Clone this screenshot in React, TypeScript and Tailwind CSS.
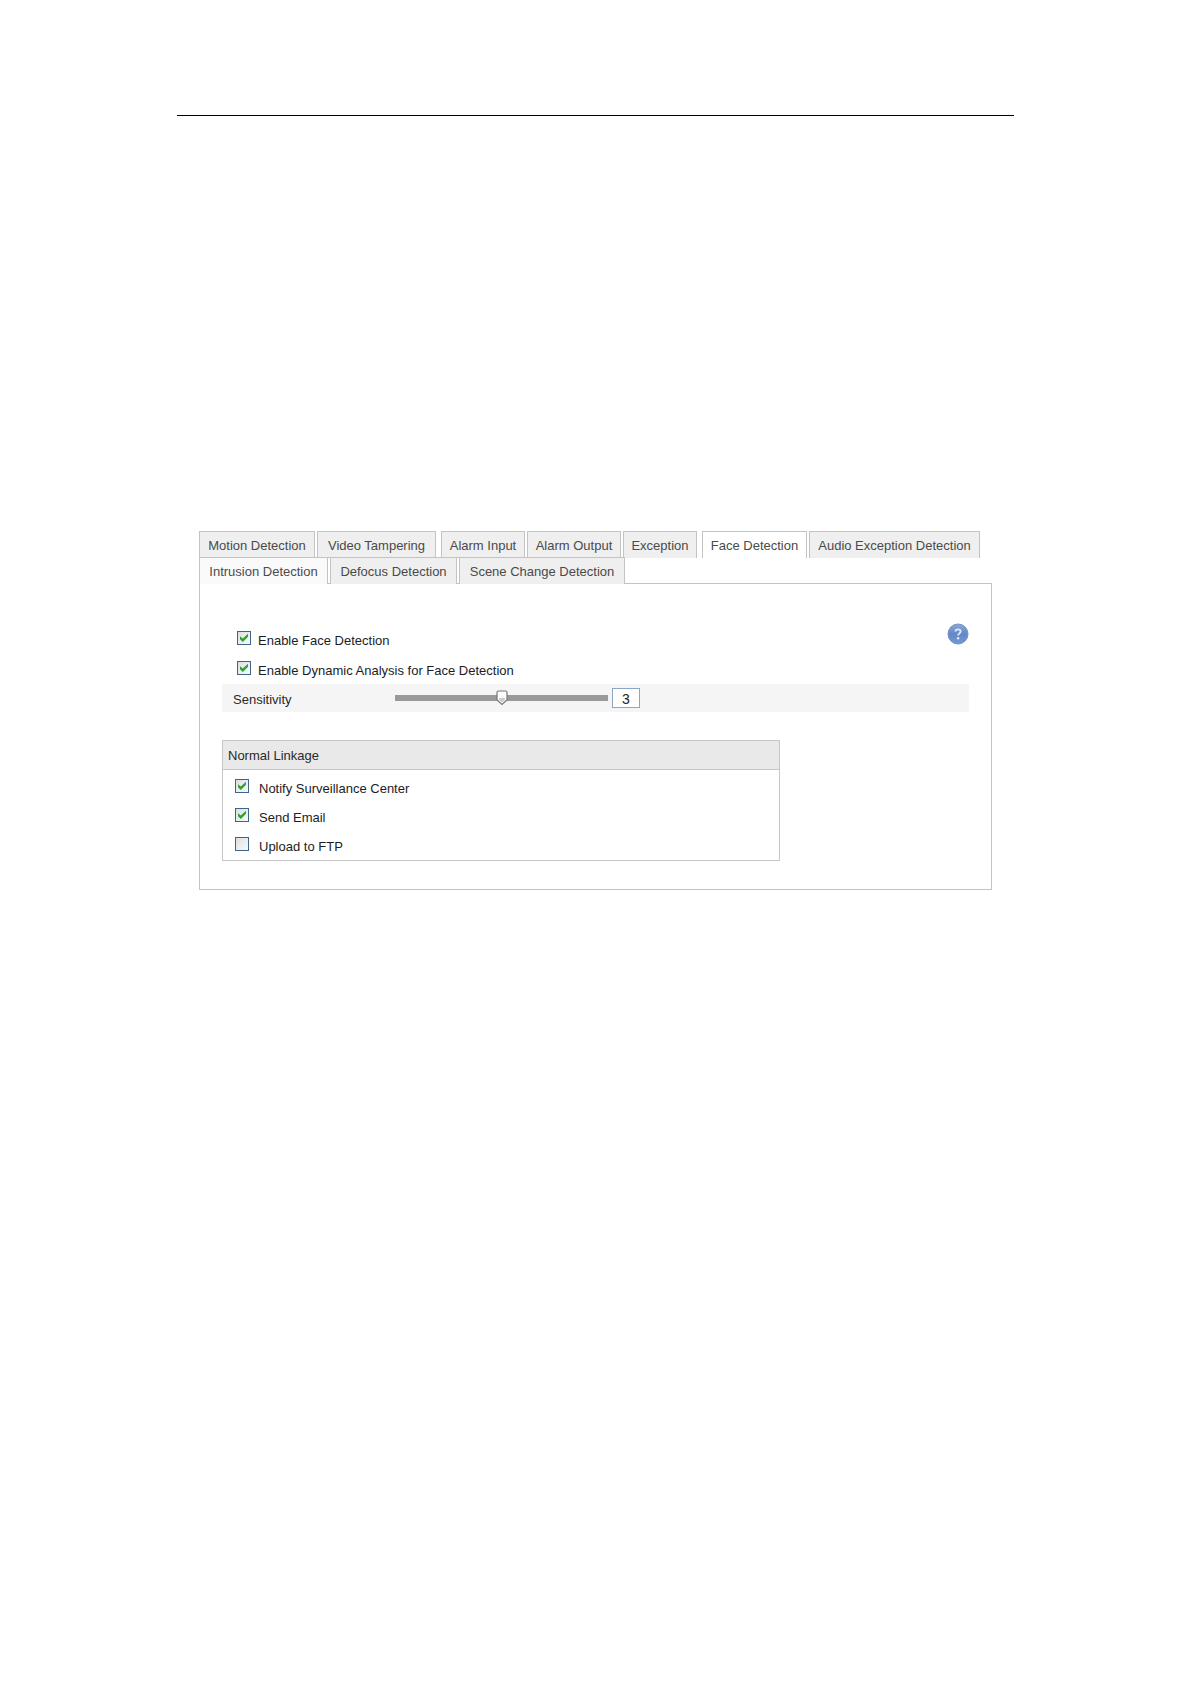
import { useState } from "react";

const upperTabs = [
  [
    { label: "Motion Detection", width: "min-w-[116px]" },
    { label: "Video Tampering", width: "min-w-[119px]" },
  ],
  [
    { label: "Alarm Input", width: "min-w-[84px]" },
    { label: "Alarm Output", width: "min-w-[94px]" },
    { label: "Exception", width: "min-w-[74px]" },
  ],
  [
    { label: "Face Detection", width: "min-w-[105px]" },
    { label: "Audio Exception Detection", width: "min-w-[171px]" },
  ],
];

const lowerTabs = [
  { label: "Intrusion Detection", width: "min-w-[129px]" },
  { label: "Defocus Detection", width: "min-w-[127px]" },
  { label: "Scene Change Detection", width: "min-w-[166px]" },
];

type CheckFieldProps = {
  id: string;
  label: string;
  gap: string;
  checked: boolean;
  onChange: (checked: boolean) => void;
};

function CheckField({ id, label, gap, checked, onChange }: CheckFieldProps) {
  return (
    <div className={`flex items-start ${gap}`}>
      <span className="grid h-[14px] w-[14px]">
        <input
          id={id}
          type="checkbox"
          checked={checked}
          onChange={(e) => onChange(e.target.checked)}
          className="col-start-1 row-start-1 h-[14px] w-[14px] appearance-none border border-[#3d6489] bg-linear-to-br from-[#dcdfe2] to-[#fafafa]"
        />
        {checked && (
          <svg
            viewBox="0 0 14 14"
            className="pointer-events-none col-start-1 row-start-1 h-[14px] w-[14px]"
            fill="#2da22d"
          >
            <path d="M3 5.2 L5.8 7.6 L11 2.8 V5.8 L5.8 10.9 L3 8.2 Z" />
          </svg>
        )}
      </span>
      <label htmlFor={id} className="mt-0.5 leading-4 text-[#1c1c24]">
        {label}
      </label>
    </div>
  );
}

function HelpIcon() {
  return (
    <svg viewBox="0 0 22 22" className="h-[22px] w-[22px]">
      <defs>
        <linearGradient id="helpFill" x1="0" y1="0" x2="0" y2="1">
          <stop offset="0" stopColor="#8aaadb" />
          <stop offset="0.5" stopColor="#6288c6" />
          <stop offset="1" stopColor="#7299d4" />
        </linearGradient>
      </defs>
      <circle cx="11" cy="11" r="10" fill="url(#helpFill)" stroke="#7390bb" />
      <path
        d="M8.5 8.6 C8.5 5.6 13.6 5.7 13.6 8.5 C13.6 10.4 11.1 10.4 11.1 12.6"
        fill="none"
        stroke="#dfe9f8"
        strokeWidth="1.9"
      />
      <circle cx="11.1" cy="15.2" r="1.2" fill="#dfe9f8" />
    </svg>
  );
}

export default function App() {
  const [activeTab, setActiveTab] = useState("Face Detection");
  const [enableFace, setEnableFace] = useState(true);
  const [enableDynamic, setEnableDynamic] = useState(true);
  const [sensitivity, setSensitivity] = useState(3);
  const [linkage, setLinkage] = useState([
    { id: "notify", label: "Notify Surveillance Center", checked: true },
    { id: "email", label: "Send Email", checked: true },
    { id: "ftp", label: "Upload to FTP", checked: false },
  ]);

  const toggleLinkage = (id: string, checked: boolean) => {
    setLinkage(linkage.map((item) => (item.id === id ? { ...item, checked } : item)));
  };

  return (
    <div className="min-h-screen bg-white px-4 pt-[115px] pb-16 font-['Liberation_Sans',Arial,sans-serif] text-[13px]">
      <div className="mx-auto max-w-[837px]">
        <hr className="border-black" />

        <main className="mx-[22px] mt-[415px] text-[#4a4a4a]">
          <div role="tablist">
            <div className="relative z-10 -mb-px flex gap-[5px]">
              {upperTabs.map((group) => (
                <div key={group[0].label} className="flex gap-[2px]">
                  {group.map((tab) => (
                    <button
                      key={tab.label}
                      role="tab"
                      aria-selected={activeTab === tab.label}
                      onClick={() => setActiveTab(tab.label)}
                      className={`h-[27px] border border-b-0 border-[#c3c3c3] px-[7px] pt-px whitespace-nowrap ${tab.width} ${
                        activeTab === tab.label ? "bg-white" : "bg-[#efefef]"
                      }`}
                    >
                      {tab.label}
                    </button>
                  ))}
                </div>
              ))}
            </div>
            <div className="relative z-10 -mb-px flex w-fit gap-[2px] border-t border-[#c3c3c3]">
              {lowerTabs.map((tab, i) => (
                <button
                  key={tab.label}
                  role="tab"
                  aria-selected={activeTab === tab.label}
                  onClick={() => setActiveTab(tab.label)}
                  className={`h-[26px] border-x border-[#c3c3c3] px-[7px] pt-px whitespace-nowrap ${tab.width} ${
                    i === 0 ? "bg-[#fafafa]" : "bg-[#efefef]"
                  }`}
                >
                  {tab.label}
                </button>
              ))}
            </div>
          </div>

          <div className="border border-[#c3c3c3] px-[22px] pt-[39px] pb-[28px]">
            <div className="flex items-start justify-between">
              <div className="flex flex-col gap-3 pt-2 pb-[5px] pl-[15px]">
                <CheckField
                  id="enable-face"
                  label="Enable Face Detection"
                  gap="gap-[7px]"
                  checked={enableFace}
                  onChange={setEnableFace}
                />
                <CheckField
                  id="enable-dynamic"
                  label="Enable Dynamic Analysis for Face Detection"
                  gap="gap-[7px]"
                  checked={enableDynamic}
                  onChange={setEnableDynamic}
                />
              </div>
              <button aria-label="Help">
                <HelpIcon />
              </button>
            </div>

            <div className="flex h-7 items-center bg-[#f5f5f5] pb-px pl-[11px] text-[#2a2a2a]">
              <label htmlFor="sensitivity" className="w-[162px] pt-1">
                Sensitivity
              </label>
              <div className="relative flex h-4 w-[213px] items-center">
                <input
                  id="sensitivity"
                  type="range"
                  min={1}
                  max={5}
                  value={sensitivity}
                  onChange={(e) => setSensitivity(Number(e.target.value))}
                  className="h-[6px] w-full appearance-none bg-[#999999] [&::-webkit-slider-thumb]:h-4 [&::-webkit-slider-thumb]:w-3 [&::-webkit-slider-thumb]:appearance-none [&::-webkit-slider-thumb]:opacity-0"
                />
                <svg
                  viewBox="0 0 12 16"
                  className="pointer-events-none absolute top-0 h-4 w-3 -translate-x-1/2"
                  style={{ left: `${(sensitivity - 1) * 25}%` }}
                >
                  <path
                    d="M2.5 1 H9.5 Q11 1 11 2.5 V10 L6 14.5 L1 10 V2.5 Q1 1 2.5 1 Z"
                    fill="#fdfdfd"
                    stroke="#777777"
                    strokeWidth="1.2"
                  />
                  <path d="M3 8 H9 V10 L6 12.5 L3 10 Z" fill="#cccccc" />
                </svg>
              </div>
              <input
                type="text"
                aria-label="Sensitivity value"
                value={sensitivity}
                onChange={(e) => setSensitivity(Math.min(5, Math.max(1, Number(e.target.value) || 1)))}
                className="ml-1 h-5 w-7 border border-[#8ea6c6] bg-white pt-0.5 text-center text-sm text-[#1c1c1c]"
              />
            </div>

            <section className="mt-7 max-w-[558px] border border-[#c6c6c6]">
              <h2 className="flex h-[29px] items-center border-b border-[#c6c6c6] bg-[#e9e9e9] pt-px pl-[5px] text-[#2a2a2a]">
                Normal Linkage
              </h2>
              <div className="flex flex-col gap-[11px] pt-[9px] pb-[5px] pl-3">
                {linkage.map((item) => (
                  <CheckField
                    key={item.id}
                    id={item.id}
                    label={item.label}
                    gap="gap-[10px]"
                    checked={item.checked}
                    onChange={(checked) => toggleLinkage(item.id, checked)}
                  />
                ))}
              </div>
            </section>
          </div>
        </main>
      </div>
    </div>
  );
}
